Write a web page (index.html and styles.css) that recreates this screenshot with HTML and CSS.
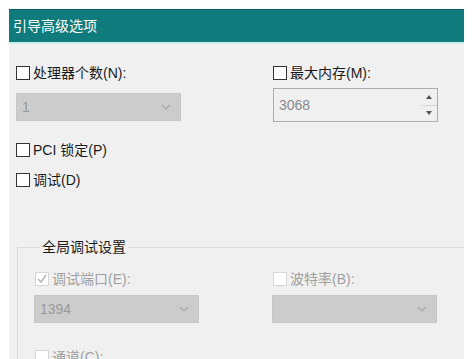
FILE: index.html
```html
<!DOCTYPE html>
<html lang="zh-CN">

<head>
    <meta charset="UTF-8">
    <meta name="viewport" content="width=device-width, initial-scale=1.0">
    <title>引导高级选项</title>
    <link rel="stylesheet" href="styles.css">
</head>

<body>
    <div class="window">
        <div class="title-bar">引导高级选项</div>

        <div class="content">
            <div class="two-cols">
                <div class="col">
                    <label class="check-row"><span class="box"></span>处理器个数(N):</label>
                    <div class="select select-top">
                        <span>1</span>
                        <svg class="chevron" width="10" height="6" viewBox="0 0 10 6"><polyline points="1,1 5,5 9,1" /></svg>
                    </div>
                </div>
                <div class="col">
                    <label class="check-row"><span class="box"></span>最大内存(M):</label>
                    <div class="spin">
                        <span class="spin-value">3068</span>
                        <div class="spin-buttons">
                            <div class="spin-btn"><svg width="6" height="4" viewBox="0 0 6 4"><polygon points="0,4 3,0 6,4" /></svg></div>
                            <div class="spin-btn"><svg width="6" height="4" viewBox="0 0 6 4"><polygon points="0,0 6,0 3,4" /></svg></div>
                        </div>
                    </div>
                </div>
            </div>

            <label class="check-row pci"><span class="box"></span>PCI 锁定(P)</label>
            <label class="check-row debug"><span class="box"></span>调试(D)</label>

            <fieldset class="group">
                <legend>全局调试设置</legend>
                <div class="group-cols">
                    <div class="col">
                        <label class="check-row disabled"><span class="box checked">
                            <svg width="12" height="12" viewBox="0 0 12 12"><polyline points="2,6 5,9 10,2" /></svg>
                        </span>调试端口(E):</label>
                        <div class="select select-group">
                            <span>1394</span>
                            <svg class="chevron" width="10" height="6" viewBox="0 0 10 6"><polyline points="1,1 5,5 9,1" /></svg>
                        </div>
                    </div>
                    <div class="col">
                        <label class="check-row disabled"><span class="box"></span>波特率(B):</label>
                        <div class="select select-group">
                            <span></span>
                            <svg class="chevron" width="10" height="6" viewBox="0 0 10 6"><polyline points="1,1 5,5 9,1" /></svg>
                        </div>
                    </div>
                </div>
                <label class="check-row disabled channel"><span class="box"></span>通道(C):</label>
            </fieldset>
        </div>
    </div>
</body>

</html>
```

FILE: styles.css
```css
body {
    margin: 0;
    padding: 0;
    background-color: #fff;
    font-family: 'Liberation Sans', 'Noto Sans CJK SC', sans-serif;
    font-size: 14px;
    color: #1a1a1a;
    overflow: hidden;
}

.window {
    margin: 9px 9px 0 9px;
    height: 350px;
    background-color: #f0f0f0;
    overflow: hidden;
}

.title-bar {
    height: 32px;
    line-height: 32px;
    padding-left: 4px;
    background-color: #0f7b7c;
    border-top: 1px solid #0a6061;
    border-bottom: 2px solid #c6f1f1;
    color: #fff;
    font-size: 14px;
}

.content {
    padding: 20px 0 0 7px;
}

.two-cols {
    display: grid;
    grid-template-columns: 257px 1fr;
}

.check-row {
    display: flex;
    align-items: center;
    height: 18px;
    line-height: 18px;
    white-space: nowrap;
}

.box {
    width: 12px;
    height: 12px;
    border: 1px solid #333;
    background-color: #fff;
    margin-right: 3px;
    display: flex;
    align-items: center;
    justify-content: center;
    flex-shrink: 0;
}

.select {
    width: 163px;
    height: 26px;
    border: 1px solid #c8c8c8;
    background-color: #cccccc;
    color: #9a9a9a;
    display: flex;
    align-items: center;
    justify-content: space-between;
    padding: 0 0 0 5px;
    box-sizing: content-box;
    width: 158px;
}

.select .chevron {
    margin-right: 9px;
    fill: none;
    stroke: #a8a8a8;
    stroke-width: 1.2;
}

.select-top {
    margin-top: 11px;
}

.spin {
    margin-top: 6px;
    width: 163px;
    height: 32px;
    border: 1px solid #adadad;
    background-color: #f0f0f0;
    display: flex;
    align-items: center;
    justify-content: space-between;
}

.spin-value {
    padding-left: 5px;
    color: #8a8a8a;
}

.spin-buttons {
    width: 16px;
    height: 100%;
    display: flex;
    flex-direction: column;
}

.spin-btn {
    flex: 1;
    display: flex;
    align-items: center;
    justify-content: center;
    fill: #555;
}

.spin-btn:first-child {
    border-bottom: 1px solid #d8d8d8;
}

.pci {
    margin-top: 19px;
}

.debug {
    margin-top: 12px;
}

.group {
    margin: 49px 0 0 1px;
    padding: 14px 0 0 16px;
    border: 1px solid #dcdcdc;
    border-right: none;
    border-bottom: none;
}

.group legend {
    margin-left: 6px;
    padding: 0 2px;
    line-height: 18px;
}

.group-cols {
    display: grid;
    grid-template-columns: 238px 1fr;
}

.disabled {
    color: #a0a0a0;
}

.disabled .box {
    border-color: #d6d6d6;
    margin-left: 1px;
}

.box.checked svg {
    fill: none;
    stroke: #b8b8b8;
    stroke-width: 1.5;
}

.select-group {
    margin-top: 7px;
}

.channel {
    margin-top: 25px;
}
```
